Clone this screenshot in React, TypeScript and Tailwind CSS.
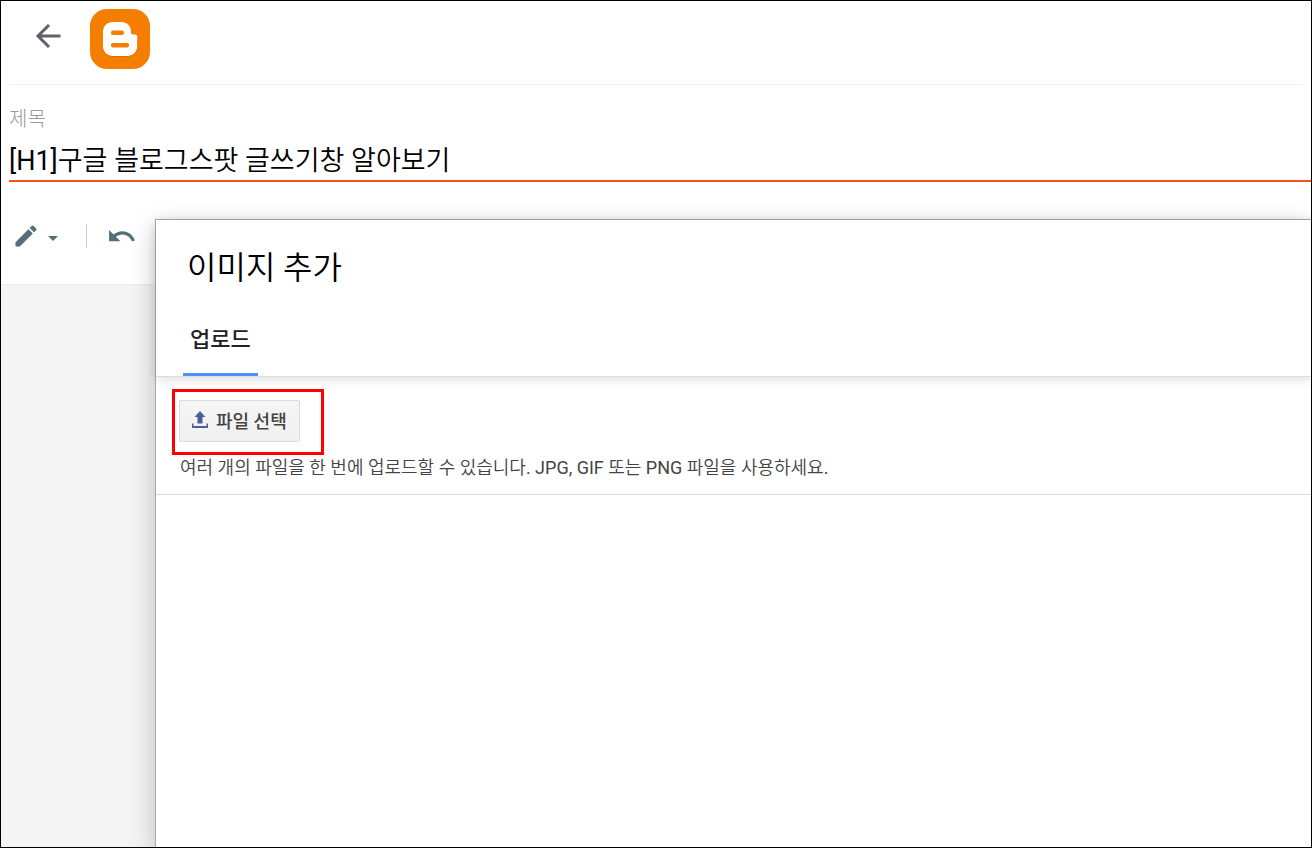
import { useRef, useState } from "react";

function BloggerLogo() {
  return (
    <svg viewBox="0 0 60 60" className="size-15" aria-hidden="true">
      <rect width="60" height="60" rx="17" fill="#f57d00" />
      <path
        d="M23 14h8.500c5.500 0 9.500 4 9.500 9.500v1c0 1.200.8 2 2 2h2c1.400 0 2.200.9 2.200 2.200V38c0 6-4.200 10-10.200 10H23c-6 0-10-4.200-10-10V24c0-6 4-10 10-10z"
        fill="#c96600"
        opacity="0.55"
      />
      <path
        d="M23 13h8.500c5.500 0 9.500 4 9.500 9.500v1c0 1.200.8 2 2 2h2c1.400 0 2.200.9 2.200 2.200V37c0 6-4.200 10-10.200 10H23c-6 0-10-4.200-10-10V23c0-6 4-10 10-10z"
        fill="#fff"
      />
      <rect x="21" y="21.500" width="13" height="4.500" rx="2" fill="#f57d00" />
      <rect x="21" y="34" width="18" height="4.500" rx="2" fill="#f57d00" />
    </svg>
  );
}

function ImageDialog() {
  const fileInput = useRef<HTMLInputElement>(null);

  return (
    <section
      role="dialog"
      aria-labelledby="dialog-title"
      className="absolute top-[218px] right-0 bottom-0 left-[154px] border-t border-l border-[#a9a9a9] bg-white shadow-[0_8px_24px_rgba(0,0,0,0.22)]"
    >
      <div className="relative border-b border-[#dcdcdc] shadow-[0_2px_10px_rgba(0,0,0,0.14)]">
        <h2 id="dialog-title" className="px-[31px] pt-6 text-[32px] leading-12 font-[350] text-black">
          이미지 추가
        </h2>
        <div role="tablist" className="mt-5 flex pl-[27px]">
          <button
            type="button"
            role="tab"
            aria-selected="true"
            className="h-16 border-b-3 border-[#4d90fe] px-[7px] pb-1.5 text-[22px] leading-8 font-medium text-[#222]"
          >
            업로드
          </button>
        </div>
      </div>

      <div className="border-b border-[#dcdcdc] px-4 pt-3 pb-[13px]">
        <div className="w-fit border-3 border-[#f00] pt-2 pr-[21px] pb-2.5 pl-1">
          <button
            type="button"
            onClick={() => fileInput.current?.click()}
            className="flex h-[42px] items-center gap-2 rounded-xs border border-[#dcdcdc] bg-linear-to-b from-[#f5f5f5] to-[#f0f0f0] px-3 text-[18px] font-medium text-[#444]"
          >
            <svg viewBox="0 0 16 17" className="mb-1 h-[17px] w-4" fill="#4a5f9e" aria-hidden="true">
              <path d="M8 0l5.500 6H10.500v6.500h-5V6h-3zM0 12.500h1.500v2.500h13v-2.500H16V17H0z" />
            </svg>
            파일 선택
          </button>
          <input ref={fileInput} type="file" multiple accept="image/*" aria-label="파일 선택" className="hidden" />
        </div>
        <p className="px-2 font-['Roboto','Noto_Sans_CJK_KR_DemiLight','Noto_Sans_CJK_KR',sans-serif] text-[18px] leading-[26px] text-[#444]">
          여러 개의 파일을 한 번에 업로드할 수 있습니다. JPG, GIF 또는 PNG 파일을 사용하세요.
        </p>
      </div>
    </section>
  );
}

export default function App() {
  const [title, setTitle] = useState("[H1]구글 블로그스팟 글쓰기창 알아보기");

  return (
    <div className="relative flex min-h-screen flex-col overflow-hidden border border-black bg-white font-['Roboto','Noto_Sans_CJK_KR',sans-serif]">
      <header className="mx-2 flex h-21 items-start gap-[27px] border-b border-[#f0f0f0] pt-2 pl-6">
        <button type="button" aria-label="뒤로" className="mt-3">
          <svg viewBox="0 0 30 30" className="size-[30px]" fill="none" stroke="#5f6368" strokeWidth="3" aria-hidden="true">
            <path d="M27.500 15H5.500M16 4L5 15l11 11" />
          </svg>
        </button>
        <a href="#" aria-label="Blogger">
          <BloggerLogo />
        </a>
      </header>

      <div className="flex flex-col pt-[18px] pl-2">
        <label htmlFor="title" className="text-[20px] leading-8 font-light text-[#999]">
          제목
        </label>
        <input
          id="title"
          value={title}
          onChange={(e) => setTitle(e.target.value)}
          className="h-[47px] border-b-2 border-[#f4511e] pt-0.5 font-['Roboto','Noto_Sans_CJK_KR_DemiLight','Noto_Sans_CJK_KR',sans-serif] text-[27px] text-black outline-none"
        />
      </div>

      <div className="flex h-[102px] items-center gap-[22px] pt-1.5 pl-[11px]">
        <button type="button" aria-label="작성 모드" className="flex items-center gap-2 pr-1.5">
          <svg viewBox="0 0 24 24" className="size-7" fill="#546e7a" aria-hidden="true">
            <path d="M3 17.250V21h3.750L17.810 9.940l-3.750-3.750L3 17.250zM20.710 7.040a1 1 0 0 0 0-1.410l-2.340-2.340a1 1 0 0 0-1.410 0l-1.830 1.830 3.750 3.750 1.830-1.830z" />
          </svg>
          <svg viewBox="0 0 10 5" className="mt-1 h-[5px] w-2.5" fill="#546e7a" aria-hidden="true">
            <path d="M0 0h10L5 5z" />
          </svg>
        </button>
        <span className="h-6 w-px bg-[#ccc]" />
        <button type="button" aria-label="실행 취소">
          <svg viewBox="2 7 20.500 9.500" className="h-3 w-[26px]" fill="#546e7a" aria-hidden="true">
            <path d="M12.500 8c-2.650 0-5.050.99-6.900 2.600L2 7v9h9l-3.620-3.620c1.390-1.160 3.160-1.880 5.120-1.880 3.540 0 6.550 2.310 7.600 5.500l2.370-.78C21.080 11.030 17.150 8 12.500 8z" />
          </svg>
        </button>
      </div>

      <main className="flex-1 border-t border-[#ececec] bg-[#f4f4f4]" />

      <ImageDialog />
    </div>
  );
}
